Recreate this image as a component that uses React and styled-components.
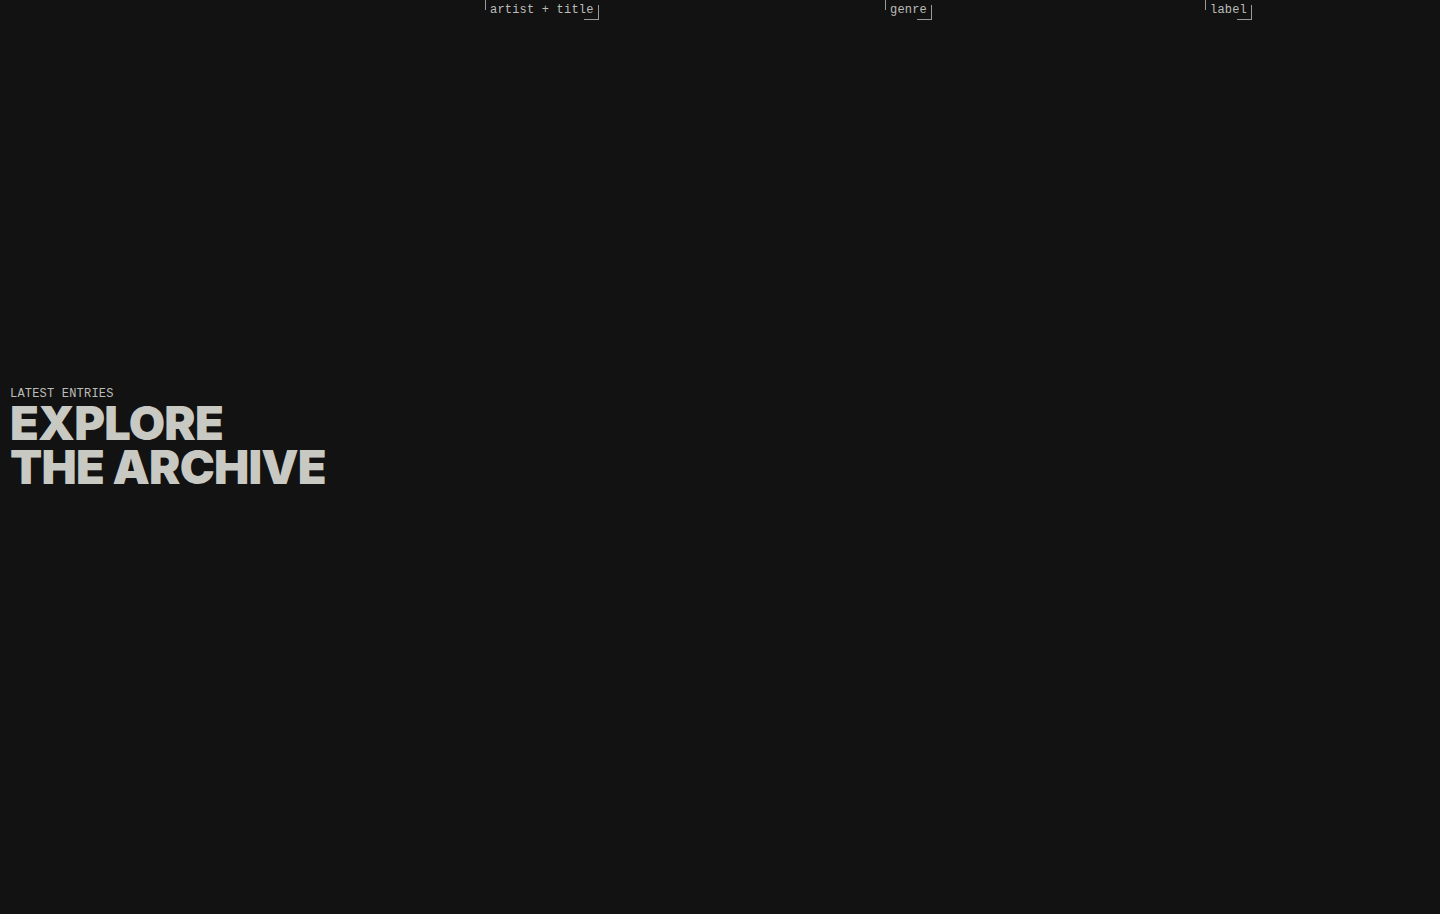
import styled, { createGlobalStyle } from "styled-components";

const GlobalStyle = createGlobalStyle`
  html, body {
    margin: 0;
    padding: 0;
    background: #121212;
  }
  body {
    font-family: "Liberation Sans", Arial, sans-serif;
    color: #c9c9c4;
  }
`;

export const Page = styled.div`
  min-height: 914px;
  background: #121212;
  display: flex;
  flex-direction: column;
`;

export const HeaderRow = styled.div`
  display: grid;
  grid-template-columns: 485px 400px 320px 1fr;
  height: 20px;
`;

export const ColumnLabel = styled.div`
  grid-column: ${(props) => props.col};
  justify-self: start;
  position: relative;
  height: 20px;
  box-sizing: border-box;
  padding: 2px 5px 0 5px;
  font-family: "Liberation Mono", "DejaVu Sans Mono", monospace;
  font-size: 12px;
  letter-spacing: 0.2px;
  line-height: 16px;
  color: #bdbdb8;

  &::before {
    content: "";
    position: absolute;
    left: 0;
    top: 0;
    width: 1px;
    height: 10px;
    background: #9a9a96;
  }
  &::after {
    content: "";
    position: absolute;
    right: 0;
    bottom: 0;
    width: 15px;
    height: 15px;
    border-right: 1px solid #9a9a96;
    border-bottom: 1px solid #9a9a96;
    box-sizing: border-box;
  }
`;

export const Hero = styled.section`
  padding: 367px 0 0 10px;
`;

export const Eyebrow = styled.p`
  margin: 0;
  font-family: "Liberation Mono", "DejaVu Sans Mono", monospace;
  font-size: 12px;
  letter-spacing: 0.2px;
  line-height: 14px;
  color: #bdbdb8;
  text-transform: uppercase;
`;

export const Title = styled.h1`
  margin: 0;
  font-family: Inter, "Liberation Sans", Arial, sans-serif;
  font-weight: 900;
  font-size: 47px;
  line-height: 44px;
  letter-spacing: -0.8px;
  color: #c9c9c4;
  text-transform: uppercase;
`;

const columns = [
  { col: 2, text: "artist + title" },
  { col: 3, text: "genre" },
  { col: 4, text: "label" },
];

const App = () => {
  return (
    <Page>
      <GlobalStyle />
      <HeaderRow>
        {columns.map((c) => (
          <ColumnLabel key={c.text} col={c.col}>
            {c.text}
          </ColumnLabel>
        ))}
      </HeaderRow>
      <Hero>
        <Eyebrow>Latest entries</Eyebrow>
        <Title>
          Explore
          <br />
          The archive
        </Title>
      </Hero>
    </Page>
  );
};

export default App;
